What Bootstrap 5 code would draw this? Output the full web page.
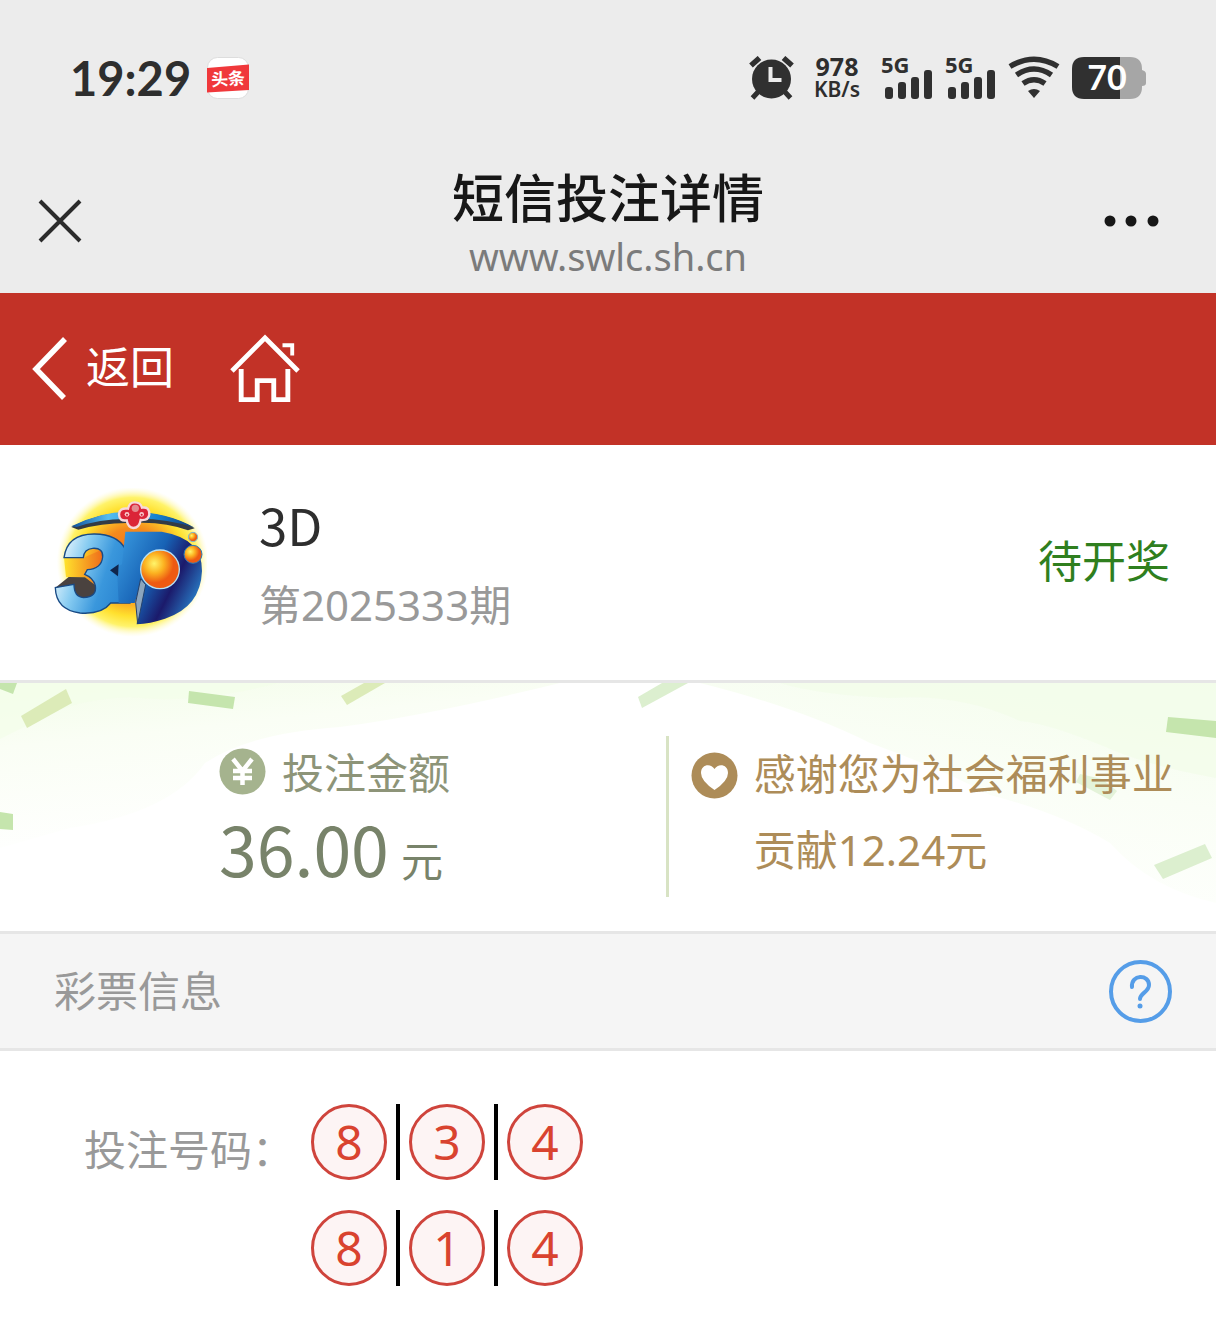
<!DOCTYPE html>
<html lang="zh-CN">
<head>
<meta charset="utf-8">
<meta name="viewport" content="width=device-width, initial-scale=1">
<title>短信投注详情</title>
<link href="https://cdn.jsdelivr.net/npm/bootstrap@5.3.0/dist/css/bootstrap.min.css" rel="stylesheet">
<style>
  body { font-family: "Noto Sans CJK SC", sans-serif; color: #2e2e2e; background: #fff; font-size: 42px; line-height: 60px; }
  svg { display: block; flex: none; }
  .latin { font-family: "Noto Sans", "Noto Sans CJK SC", sans-serif; }
  .muted { color: #999; }
  .chrome-top { background: #ececec; }
  .statusbar { height: 156px; padding: 0 70px; }
  .clock { font: 700 47px/60px Lato, sans-serif; }
  .net-speed { font: 700 25px/23px "Noto Sans", sans-serif; width: 54px; }
  .net-unit { font-size: 21px; font-weight: 600; }
  .titlebar { height: 137px; padding: 0 56px 7px 38px; }
  .title-text { padding-top: 10px; }
  .page-title { font-size: 52px; font-weight: 500; line-height: 60px; color: #171717; }
  .page-url { font: 400 38px/60px "Noto Sans", sans-serif; color: #7b7b7b; }
  .slot-left { width: 74px; }
  .slot-right { width: 56px; }
  .redbar { background: #c23227; height: 152px; padding: 0 32px; }
  .redbar a { color: #fff; font-size: 44px; }
  .home-link { margin-left: 56px; }
  .game { height: 238px; padding: 0 46px 0 50px; border-bottom: 3px solid #e6e6e6; }
  .game-name { font-size: 51px; line-height: 66px; }
  .game-issue { padding-top: 18px; }
  .game-text { padding-left: 52px; }
  .status { color: #2f7f1e; font-size: 44px; }
  .thanks { border-bottom: 3px solid #e6e6e6; height: 251px; padding: 53px 0 34px; }
  .confetti { inset: 0; width: 100%; height: 100%; }
  .stake { width: 55%; padding: 5px 0 0 219px; color: #8d9478; border-right: 3px solid #d8e3c4; }
  .amount { font-size: 68px; line-height: 94px; color: #78836a; }
  .unit { font-size: 42px; }
  .gift { color: #ad8c58; padding-left: 22px; line-height: 76px; }
  .gift svg { margin-top: 16px; }
  .section-head { background: #f5f5f5; border-bottom: 3px solid #e6e6e6; height: 117px; padding: 0 44px 0 54px; }
  .sec-title { font-size: 42px; line-height: 60px; }
  .numbers { padding: 53px 84px 38px; }
  .numbers-label { width: 227px; padding-top: 14px; }
  .picks { gap: 30px; }
  .pick { gap: 9px; }
  .ball { width: 76px; height: 76px; border: 3px solid #cf443c; border-radius: 50%; background: #fdf4f4; color: #d9432f; font-size: 48px; line-height: 70px; text-align: center; }
  .bar { width: 4px; background: #000; }
</style>
</head>
<body>
<header class="chrome-top">
  <div class="statusbar d-flex align-items-center justify-content-between">
    <div class="d-flex align-items-center">
      <span class="clock">19:29</span>
      <svg class="ms-3" width="42" height="42" viewBox="0 0 42 42" role="img" aria-label="头条"><rect x=".5" y=".5" width="41" height="41" rx="10" fill="#fff" stroke="#ddd"/><path d="M0 11 42 7.500V33L0 35.500Z" fill="#f0383b"/><text x="21" y="28" text-anchor="middle" font-family="Noto Sans CJK SC" font-weight="700" font-size="17" fill="#fff" transform="rotate(-3 21 21)">头条</text></svg>
    </div>
    <div class="d-flex align-items-center">
      <svg width="45" height="44" viewBox="0 0 45 44" role="img" aria-label="闹钟"><circle cx="22.500" cy="23" r="19.500" fill="#303030"/><path d="M21.500 11v13h11" fill="none" stroke="#ececec" stroke-width="4"/><path d="M2 9.500 10.500 2M34.500 2 43 9.500" stroke="#303030" stroke-width="5.500"/><path d="m9 36-5.500 6M36 36l5.500 6" stroke="#303030" stroke-width="5"/></svg>
      <div class="net-speed text-center d-flex flex-column ms-3"><span>978</span><span class="net-unit">KB/s</span></div>
      <svg class="ms-3" width="56" height="56" viewBox="0 -6 56 56" role="img" aria-label="5G 信号"><g fill="#303030"><text x="1" y="17" font-family="Noto Sans" font-weight="700" font-size="22">5G</text><rect x="5" y="31" width="8" height="12" rx="3"/><rect x="18" y="26" width="8" height="17" rx="3"/><rect x="31" y="21" width="8" height="22" rx="3"/><rect x="44" y="14" width="8" height="29" rx="3"/></g></svg>
      <svg class="ms-2" width="56" height="56" viewBox="0 -6 56 56" role="img" aria-label="5G 信号"><g fill="#303030"><text x="1" y="17" font-family="Noto Sans" font-weight="700" font-size="22">5G</text><rect x="4" y="31" width="8" height="12" rx="3"/><rect x="17" y="26" width="8" height="17" rx="3"/><rect x="30" y="21" width="8" height="22" rx="3"/><rect x="43" y="14" width="8" height="29" rx="3"/></g></svg>
      <svg class="ms-2" width="52" height="44" viewBox="0 0 52 44" role="img" aria-label="无线网络"><g fill="none" stroke="#303030" stroke-width="5.500"><path d="M2 10.500Q26-4 50 10.500"/><path d="M8.500 19Q26 7 43.500 19"/><path d="M15 27.500Q26 20 37 27.500"/></g><path d="M20 35Q26 31 32 35L26 42Z" fill="#303030"/></svg>
      <svg class="ms-2 ps-1" width="78" height="44" viewBox="0 0 74 44" role="img" aria-label="电量 70"><path d="M12 1H49V43H12Q0 43 0 31V13Q0 1 12 1Z" fill="#303030"/><path d="M48 1H58Q70 1 70 13V14Q74 15 74 18V27Q74 30 70 30V31Q70 43 58 43H48Z" fill="#a6a6a6"/><text x="35" y="34" text-anchor="middle" font-family="Lato" font-weight="700" font-size="34" fill="#fff">70</text></svg>
    </div>
  </div>
  <div class="titlebar d-flex justify-content-between align-items-center">
    <div class="slot-left d-flex"><button class="btn p-0 border-0" aria-label="关闭"><svg width="44" height="44" viewBox="0 0 44 44"><path d="M2 2 42 42M42 2 2 42" stroke="#2b2b2b" stroke-width="4"/></svg></button></div>
    <div class="title-text text-center">
      <h1 class="page-title m-0">短信投注详情</h1>
      <div class="page-url">www.swlc.sh.cn</div>
    </div>
    <div class="slot-right d-flex"><button class="btn p-0 border-0" aria-label="更多"><svg width="56" height="44" viewBox="0 0 56 44"><g fill="#171717"><circle cx="6" cy="22" r="5.500"/><circle cx="27" cy="22" r="5.500"/><circle cx="49" cy="22" r="5.500"/></g></svg></button></div>
  </div>
</header>

<nav class="redbar d-flex align-items-center">
  <a href="#" class="d-flex align-items-center text-decoration-none"><svg class="me-3" width="38" height="64" viewBox="0 0 38 64"><path d="M33 2 4 32 32 61" fill="none" stroke="#fff" stroke-width="5.500"/></svg><span class="pb-2">返回</span></a>
  <a href="#" class="home-link" aria-label="首页"><svg width="70" height="72" viewBox="0 0 72 72"><g fill="none" stroke="#fff" stroke-width="5"><path d="M2 38 36 4 70 38"/><path d="M11.500 36V67.500H28V48H45V67.500H59.500V36"/><path d="M54 11.500H64V22" stroke-width="4"/></g></svg></a>
</nav>

<main>
  <section class="game d-flex align-items-center">
    <svg width="157" height="150" viewBox="60 53 471 450" role="img" aria-label="3D">
      <defs>
        <radialGradient id="sun"><stop offset="0" stop-color="#f36b18"/><stop offset=".45" stop-color="#f58a1c"/><stop offset=".72" stop-color="#ffe02e"/><stop offset=".86" stop-color="#fff36a"/><stop offset="1" stop-color="#fffbd0" stop-opacity="0"/></radialGradient>
        <linearGradient id="three" gradientUnits="userSpaceOnUse" x1="90" y1="230" x2="300" y2="300"><stop offset="0" stop-color="#eef9fe"/><stop offset=".35" stop-color="#86cbf1"/><stop offset=".7" stop-color="#3a97dc"/><stop offset="1" stop-color="#2b86d2"/></linearGradient>
        <linearGradient id="dee" x1="0" y1=".2" x2="1" y2=".7"><stop offset="0" stop-color="#3a9be0"/><stop offset=".45" stop-color="#1762b5"/><stop offset=".7" stop-color="#1b1a6b"/><stop offset="1" stop-color="#2a86cf"/></linearGradient>
        <linearGradient id="arc"><stop offset="0" stop-color="#0d4f9c"/><stop offset=".3" stop-color="#55bdf0"/><stop offset=".7" stop-color="#1580d0"/><stop offset="1" stop-color="#123a78"/></linearGradient>
        <radialGradient id="orb" cx=".35" cy=".35"><stop offset="0" stop-color="#fff56b"/><stop offset=".5" stop-color="#fcb321"/><stop offset="1" stop-color="#ee5a12"/></radialGradient>
        <linearGradient id="glow"><stop offset="0" stop-color="#ffe32d"/><stop offset="1" stop-color="#ef6a1a"/></linearGradient>
      </defs>
      <ellipse cx="308" cy="275" rx="228" ry="225" fill="url(#sun)"/>
      <path d="M124 170Q215 124 300 126Q410 126 494 174L474 180Q400 152 306 158Q220 156 145 178Z" fill="#333b45"/>
      <path d="M124 168Q215 122 300 124Q410 124 494 172Q400 142 306 146Q215 143 140 170Z" fill="url(#arc)"/>
      <path d="M102 262H160L220 236V290L196 346 165 320H108Z" fill="url(#glow)"/>
      <path d="M76 352 116 320 165 321 196 345Q202 385 160 386L120 366Z" fill="#4a423f"/>
      <path d="M102 262Q112 190 194 191Q262 192 285 235L330 330 300 398H242Q215 433 150 428Q78 418 76 352L132 342Q132 380 160 382Q202 380 196 346Q190 322 164 312L172 298Q214 296 218 260Q220 232 188 234Q162 236 160 262Z" fill="url(#three)" stroke="#184a85" stroke-width="4"/>
      <path d="M286 184H395Q518 205 516 302Q512 410 405 445Q360 460 320 462L334 335 314 398H266L262 320 240 300 276 282Z" fill="url(#dee)"/>
      <path d="m240 300 26-18-2 36Z" fill="#10254b"/>
      <path d="m332 325 15 18-24 118-6-65Z" fill="#8ba5bd" stroke="#25416b" stroke-width="3"/>
      <circle cx="390" cy="297" r="58" fill="url(#orb)" stroke="#b6e1f5" stroke-width="4"/>
      <circle cx="489" cy="252" r="27" fill="url(#orb)" stroke="#267dbb" stroke-width="3"/>
      <circle cx="489" cy="200" r="14" fill="url(#orb)" stroke="#7eb8d0" stroke-width="3"/>
      <path d="M294 115Q298 96 314 96Q332 96 336 112Q358 108 358 132Q356 151 332 149Q328 173 310 173Q294 172 290 150Q268 154 267 132Q268 112 294 115Z" fill="#db2438" stroke="#f7d9db" stroke-width="7"/>
      <circle cx="316" cy="114" r="11" fill="#e48a8f"/><circle cx="291" cy="132" r="7" fill="#f8c9cc"/><circle cx="335" cy="132" r="7" fill="#f8c9cc"/><circle cx="291" cy="133" r="3" fill="#c91c31"/><circle cx="335" cy="133" r="3" fill="#c91c31"/>
    </svg>
    <div class="game-text flex-grow-1">
      <div class="game-name">3D</div>
      <div class="game-issue latin muted">第2025333期</div>
    </div>
    <div class="status pb-2">待开奖</div>
  </section>

  <section class="thanks position-relative d-flex">
    <svg class="confetti position-absolute" viewBox="0 0 1216 248" preserveAspectRatio="none" aria-hidden="true">
      <defs><linearGradient id="leftGlow" x1="0" y1="0" x2=".35" y2="1"><stop offset="0" stop-color="#f3fde9"/><stop offset=".35" stop-color="#fafef5"/><stop offset="1" stop-color="#fff"/></linearGradient>
      <linearGradient id="rightGlow" x1="1" y1="0" x2=".6" y2="1"><stop offset="0" stop-color="#f4fdec"/><stop offset=".5" stop-color="#fafef6"/><stop offset="1" stop-color="#fefffd"/></linearGradient></defs>
      <path d="M0 0H560Q430 32 340 44 250 50 205 80 170 130 70 145L0 165Z" fill="url(#leftGlow)"/>
      <path d="M0 0H280Q190 22 130 14 80 16 48 32L0 56Z" fill="#f3fde9" opacity=".7"/>
      <path d="M700 0H1216V220Q1150 205 1110 160 1060 130 990 112 940 85 870 60 800 25 700 0Z" fill="url(#rightGlow)"/>
      <path d="M780 0H1216V95Q1160 85 1120 70 1050 40 1020 38 960 10 890 15 820 12 780 0Z" fill="#f3fcea" opacity=".8"/>
      <g fill="#c5e5ad"><path d="M0 0H17L13 11 0 6Z"/><path d="m189 8 46 6-2 12-45-6Z"/><path d="M0 129 13 131V147L0 146Z"/><path d="m1168 34 48 4V55l-50-6Z"/></g>
      <g fill="#dcebb8"><path d="m21 33 45-27 6 14-45 25Z"/><path d="M341 13 364 0H385L347 22Z"/></g>
      <g fill="#dcefcf"><path d="M638 14 662 0H688L642 25Z"/><path d="m1154 182 51-21 7 14-49 21Z"/><path d="m1080 91 22 5 15 12-7 9-34-18Z" opacity=".75"/></g>
    </svg>
    <div class="stake position-relative">
      <div class="d-flex align-items-center"><svg width="47" height="47" viewBox="0 0 47 47" aria-hidden="true"><circle cx="23.500" cy="23.500" r="23" fill="#a5b38e"/><path d="m14 11 9.500 12L33 11M23.500 22V37M14 23H33M14 30H33" fill="none" stroke="#fff" stroke-width="4.500"/></svg><span class="ps-3">投注金额</span></div>
      <div class="amount">36.00<span class="unit ps-2 ms-1">元</span></div>
    </div>
    <div class="gift position-relative d-flex align-items-start">
      <svg width="47" height="47" viewBox="0 0 47 47" aria-hidden="true"><circle cx="23.500" cy="23.500" r="23" fill="#ad8c58"/><path d="M23.500 38Q10 29 10 21C10 12 20 11 23.500 17C27 11 37 12 37 21Q37 29 23.500 38Z" fill="#fff"/></svg>
      <div class="ps-3 latin">感谢您为社会福利事业<br>贡献12.24元</div>
    </div>
  </section>

  <section>
    <div class="section-head d-flex align-items-center justify-content-between">
      <h2 class="sec-title muted m-0 pb-1 fw-normal">彩票信息</h2>
      <button class="btn p-0 border-0" aria-label="帮助"><svg width="63" height="63" viewBox="0 0 63 63"><circle cx="31.500" cy="31.500" r="29.500" fill="none" stroke="#559de8" stroke-width="4"/><path d="M23 27C22 14 40 14 40 25C40 32 31 33 31 39" fill="none" stroke="#559de8" stroke-width="4" stroke-linecap="round"/><circle cx="31" cy="46" r="2.500" fill="#559de8"/></svg></button>
    </div>
    <div class="numbers d-flex">
      <div class="numbers-label muted">投注号码：</div>
      <div class="latin d-flex flex-column picks">
        <div class="pick d-flex"><span class="ball">8</span><span class="bar"></span><span class="ball">3</span><span class="bar"></span><span class="ball">4</span></div>
        <div class="pick d-flex"><span class="ball">8</span><span class="bar"></span><span class="ball">1</span><span class="bar"></span><span class="ball">4</span></div>
      </div>
    </div>
  </section>
</main>
<script src="https://cdn.jsdelivr.net/npm/bootstrap@5.3.0/dist/js/bootstrap.bundle.min.js"></script>
</body>
</html>
